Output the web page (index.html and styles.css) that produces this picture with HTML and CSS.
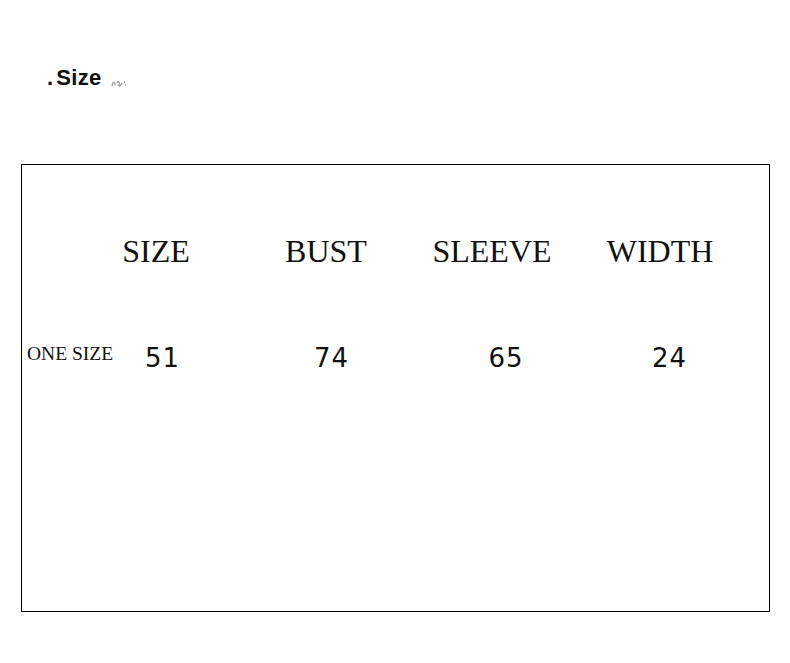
FILE: index.html
```html
<!DOCTYPE html>
<html>
<head>
<meta charset="utf-8">
<link rel="stylesheet" href="styles.css">
</head>
<body>
<div class="page">
  <div class="title">
    <span class="dot">.</span><span class="title-text">Size</span>
    <svg class="smudge" width="18" height="12" viewBox="0 0 18 12"><path d="M2 9 C3 4 5 4 5 8 M7 6 C8 3 10 5 9 8 C8 10 11 9 12 6 M14 5 l1 1 M15 8 l1 0" stroke="#9a9a9a" stroke-width="1.2" fill="none"/></svg>
  </div>
  <div class="chart">
    <div class="head-row">
      <div class="head-cell">SIZE</div>
      <div class="head-cell head-bust">BUST</div>
      <div class="head-cell">SLEEVE</div>
      <div class="head-cell">WIDTH</div>
    </div>
    <div class="data-row">
      <div class="label">ONE SIZE</div>
      <div class="num">51</div>
      <div class="num">74</div>
      <div class="num num-sleeve">65</div>
      <div class="num">24</div>
    </div>
  </div>
</div>
</body>
</html>
```

FILE: styles.css
```css
html, body {
  margin: 0;
  padding: 0;
  background: #ffffff;
}

.page {
  width: 790px;
  height: 663px;
  padding-top: 67px;
  box-sizing: border-box;
}

.title {
  display: flex;
  align-items: baseline;
  margin-left: 47px;
  height: 22px;
  font-family: "Liberation Sans", Arial, sans-serif;
  font-weight: bold;
  font-size: 22px;
  line-height: 22px;
  color: #111;
}

.dot {
  margin-right: 3px;
}

.title-text {
  letter-spacing: 0.4px;
}

.smudge {
  margin-left: 8px;
  align-self: flex-end;
}

.chart {
  margin-top: 75px;
  margin-left: 21px;
  width: 749px;
  height: 448px;
  box-sizing: border-box;
  border: 1px solid #000;
  padding-top: 70px;
}

.head-row {
  display: grid;
  grid-template-columns: 50px repeat(4, 168px);
}

.head-cell {
  font-family: "Liberation Serif", "Times New Roman", serif;
  font-size: 32px;
  line-height: 32px;
  height: 32px;
  color: #111;
  text-align: center;
}

.head-cell:first-child {
  grid-column: 2;
}

.head-bust {
  padding-left: 4px;
}

.data-row {
  display: grid;
  grid-template-columns: 56px repeat(4, 169px);
  margin-top: 78px;
  align-items: start;
}

.label {
  font-family: "Liberation Serif", "Times New Roman", serif;
  font-size: 19.5px;
  line-height: 20px;
  margin-top: -1px;
  padding-left: 5px;
  white-space: nowrap;
  color: #111;
}

.num {
  font-family: "DejaVu Sans", sans-serif;
  font-size: 26px;
  line-height: 26px;
  letter-spacing: 1px;
  text-align: center;
  color: #111;
}

.num-sleeve {
  padding-left: 11px;
}
```
